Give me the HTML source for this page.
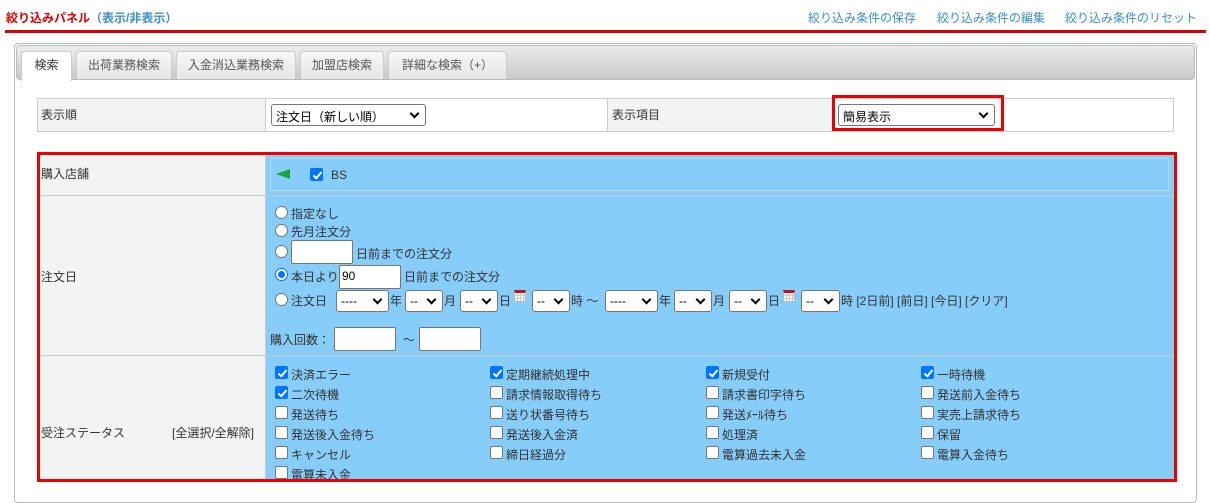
<!DOCTYPE html>
<html><head><meta charset="utf-8"><style>
*{box-sizing:border-box;margin:0;padding:0}
body{width:1210px;height:484px;overflow:hidden;background:#fff;font-family:"Liberation Sans","Noto Sans CJK JP",sans-serif;font-size:12px;color:#333;position:relative}
.a{position:absolute;white-space:nowrap}
.lnk{color:#3d8fc8}
.sel{position:absolute;height:22px;border:1px solid #767676;border-radius:3px;background:#fff;font-size:12px;padding:3px 4px;color:#000}
.sel:after{content:"";position:absolute;right:7px;top:5px;width:5px;height:5px;border-right:2px solid #000;border-bottom:2px solid #000;transform:rotate(45deg)}
.inp{position:absolute;height:24px;border:1px solid #767676;border-radius:2px;background:#fff;padding:3px 2px;font-size:12px;color:#000}
.rad{position:absolute;width:13px;height:13px;border:1px solid #767676;border-radius:50%;background:#fff}
.rad.on{border-color:#0075ff;border-width:1px}
.rad.on:after{content:"";position:absolute;left:2px;top:2px;width:7px;height:7px;border-radius:50%;background:#0075ff}
.cb{position:absolute;width:13px;height:13px;border:1px solid #767676;border-radius:2px;background:#fff}
.cb.on{background:#0075ff;border-color:#0075ff}
.cb.on:after{content:"";position:absolute;left:3.5px;top:0.5px;width:3px;height:7px;border-right:2px solid #fff;border-bottom:2px solid #fff;transform:rotate(40deg)}
.tab{position:absolute;top:51px;height:28px;border:1px solid #ccc;border-bottom:none;border-radius:4px 4px 0 0;background:linear-gradient(#f6f6f6,#e6e6e6);color:#555;text-align:center;line-height:26px;font-size:12px}
.cal{position:absolute;width:12px;height:12px;border:1px solid #bbb;border-top:3px solid #c8121b;background-color:#fff;background-image:repeating-linear-gradient(90deg,transparent 0 2px,#ccc 2px 3px),repeating-linear-gradient(0deg,transparent 0 2px,#ccc 2px 3px)}
.t{top:1px}
</style></head><body>
<div class="a" style="left:6px;top:9px;font-size:12px;font-weight:bold"><span style="color:#d00">絞り込みパネル</span><span class="lnk">（表示/非表示）</span></div>
<div class="a lnk" style="left:808px;top:9px">絞り込み条件の保存</div>
<div class="a lnk" style="left:937px;top:9px">絞り込み条件の編集</div>
<div class="a lnk" style="left:1065px;top:9px">絞り込み条件のリセット</div>
<div class="a" style="left:5px;top:30px;width:1201px;height:3px;background:#d00"></div>

<div class="a" style="left:14px;top:43px;width:1183px;height:460px;border:1px solid #bbb;border-radius:4px"></div>
<div class="a" style="left:16px;top:45px;width:1179px;height:35px;border:1px solid #bbb;border-radius:4px;background:linear-gradient(#ececec,#c9c9c9)"></div>
<div class="tab" style="left:21px;width:51px;background:#fff;color:#333;height:30px">検索</div>
<div class="tab" style="left:76px;width:96px">出荷業務検索</div>
<div class="tab" style="left:176px;width:120px">入金消込業務検索</div>
<div class="tab" style="left:300px;width:84px">加盟店検索</div>
<div class="tab" style="left:388px;width:119px">詳細な検索（+）</div>

<div class="a" style="left:37px;top:98px;width:1137px;height:34px;border:1px solid #ccc;background:#fff"></div>
<div class="a" style="left:38px;top:99px;width:228px;height:32px;background:#f2f3f3;border-right:1px solid #ccc"></div>
<div class="a" style="left:607px;top:99px;width:226px;height:32px;background:#f2f3f3;border-left:1px solid #ccc"></div>
<div class="a" style="left:41px;top:106px">表示順</div>
<div class="sel" style="left:271px;top:104px;width:155px">注文日（新しい順）</div>
<div class="a" style="left:612px;top:106px">表示項目</div>
<div class="a" style="left:832px;top:95px;width:172px;height:36px;border:3px solid #e00"></div>
<div class="sel" style="left:838px;top:104px;width:157px">簡易表示</div>

<div class="a" style="left:37px;top:152px;width:1140px;height:330px;border:3px solid #e00;background:#87cdf9"></div>
<div class="a" style="left:40px;top:155px;width:226px;height:324px;background:#f2f3f3;border-right:1px solid #ccc"></div>
<div class="a" style="left:40px;top:195px;width:1134px;height:1px;background:#ccc"></div>
<div class="a" style="left:40px;top:355px;width:1134px;height:1px;background:#ccc"></div>
<div class="a" style="left:270px;top:158px;width:899px;height:33px;border:1px solid #b5d8ee"></div>

<div class="a" style="left:41px;top:165px">購入店舗</div>
<svg class="a" style="left:276px;top:168px" width="15" height="12"><path d="M0 6 L14 1 L14 11 Z" fill="#1aa33a"/></svg>
<div class="cb on" style="left:310px;top:168px"></div>
<div class="a" style="left:331px;top:168px;color:#333">BS</div>

<div class="a" style="left:41px;top:268px">注文日</div>
<div class="rad" style="left:275px;top:206px"></div><div class="a" style="left:291px;top:205px">指定なし</div>
<div class="rad" style="left:275px;top:224px"></div><div class="a" style="left:291px;top:223px">先月注文分</div>
<div class="rad" style="left:275px;top:245px"></div><div class="inp" style="left:291px;top:240px;width:62px"></div><div class="a" style="left:356px;top:245px">日前までの注文分</div>
<div class="rad on" style="left:275px;top:268px"></div><div class="a" style="left:291px;top:268px">本日より</div><div class="inp" style="left:339px;top:265px;width:62px">90</div><div class="a" style="left:404px;top:268px">日前までの注文分</div>
<div class="rad" style="left:275px;top:293px"></div><div class="a" style="left:291px;top:292px">注文日</div>
<div class="sel" style="left:336px;top:290px;width:53px">----</div><div class="a" style="left:390px;top:292px">年</div>
<div class="sel" style="left:405px;top:290px;width:38px">--</div><div class="a" style="left:444px;top:292px">月</div>
<div class="sel" style="left:460px;top:290px;width:38px">--</div><div class="a" style="left:499px;top:292px">日</div>
<div class="cal" style="left:514px;top:290px"></div>
<div class="sel" style="left:532px;top:290px;width:38px">--</div><div class="a" style="left:571px;top:292px">時 ～</div>
<div class="sel" style="left:605px;top:290px;width:53px">----</div><div class="a" style="left:659px;top:292px">年</div>
<div class="sel" style="left:674px;top:290px;width:38px">--</div><div class="a" style="left:713px;top:292px">月</div>
<div class="sel" style="left:729px;top:290px;width:38px">--</div><div class="a" style="left:768px;top:292px">日</div>
<div class="cal" style="left:783px;top:290px"></div>
<div class="sel" style="left:801px;top:290px;width:39px">--</div><div class="a" style="left:841px;top:292px">時 [2日前] [前日] [今日] [クリア]</div>
<div class="a" style="left:270px;top:331px">購入回数：</div>
<div class="inp" style="left:334px;top:327px;width:62px"></div>
<div class="a" style="left:403px;top:331px">～</div>
<div class="inp" style="left:419px;top:327px;width:62px"></div>

<div class="a" style="left:41px;top:424px">受注ステータス</div>
<div class="a" style="left:172px;top:424px">[全選択/全解除]</div>

<div class="cb on" style="left:275px;top:366px"></div><div class="a" style="left:291px;top:366px">決済エラー</div>
<div class="cb on" style="left:490px;top:366px"></div><div class="a" style="left:506px;top:366px">定期継続処理中</div>
<div class="cb on" style="left:706px;top:366px"></div><div class="a" style="left:722px;top:366px">新規受付</div>
<div class="cb on" style="left:921px;top:366px"></div><div class="a" style="left:937px;top:366px">一時待機</div>
<div class="cb on" style="left:275px;top:386px"></div><div class="a" style="left:291px;top:386px">二次待機</div>
<div class="cb" style="left:490px;top:386px"></div><div class="a" style="left:506px;top:386px">請求情報取得待ち</div>
<div class="cb" style="left:706px;top:386px"></div><div class="a" style="left:722px;top:386px">請求書印字待ち</div>
<div class="cb" style="left:921px;top:386px"></div><div class="a" style="left:937px;top:386px">発送前入金待ち</div>
<div class="cb" style="left:275px;top:406px"></div><div class="a" style="left:291px;top:406px">発送待ち</div>
<div class="cb" style="left:490px;top:406px"></div><div class="a" style="left:506px;top:406px">送り状番号待ち</div>
<div class="cb" style="left:706px;top:406px"></div><div class="a" style="left:722px;top:406px">発送ﾒｰﾙ待ち</div>
<div class="cb" style="left:921px;top:406px"></div><div class="a" style="left:937px;top:406px">実売上請求待ち</div>
<div class="cb" style="left:275px;top:426px"></div><div class="a" style="left:291px;top:426px">発送後入金待ち</div>
<div class="cb" style="left:490px;top:426px"></div><div class="a" style="left:506px;top:426px">発送後入金済</div>
<div class="cb" style="left:706px;top:426px"></div><div class="a" style="left:722px;top:426px">処理済</div>
<div class="cb" style="left:921px;top:426px"></div><div class="a" style="left:937px;top:426px">保留</div>
<div class="cb" style="left:275px;top:446px"></div><div class="a" style="left:291px;top:446px">キャンセル</div>
<div class="cb" style="left:490px;top:446px"></div><div class="a" style="left:506px;top:446px">締日経過分</div>
<div class="cb" style="left:706px;top:446px"></div><div class="a" style="left:722px;top:446px">電算過去未入金</div>
<div class="cb" style="left:921px;top:446px"></div><div class="a" style="left:937px;top:446px">電算入金待ち</div>
<div class="cb" style="left:275px;top:466px"></div><div class="a" style="left:291px;top:466px">電算未入金</div>
<div class="a" style="left:37px;top:479px;width:1140px;height:3px;background:#e00"></div>
</body></html>
